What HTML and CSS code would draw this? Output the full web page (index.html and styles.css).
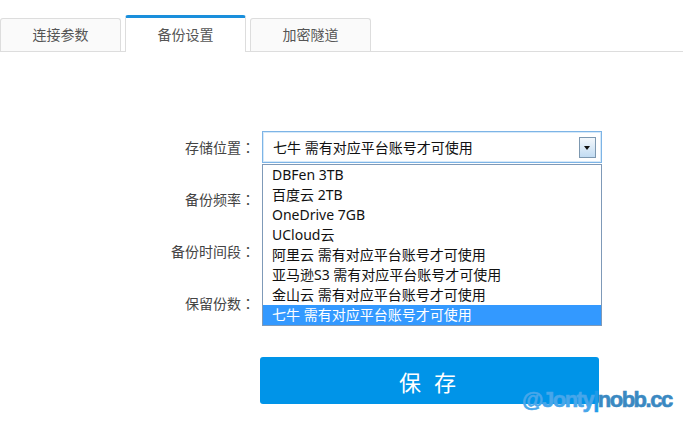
FILE: index.html
```html
<!DOCTYPE html>
<html lang="zh-CN">
<head>
    <meta charset="UTF-8">
    <title>备份设置</title>
    <link rel="stylesheet" href="styles.css">
</head>
<body>
    <!-- Tabs -->
    <div class="tabs">
        <div class="tab">连接参数</div>
        <div class="tab active">备份设置</div>
        <div class="tab">加密隧道</div>
    </div>

    <!-- Backup form -->
    <div class="form">
        <label class="label">存储位置<span class="colon">：</span></label>
        <div class="field select-wrap">
            <div class="select">
                <span>七牛 需有对应平台账号才可使用</span>
                <span class="arrow"></span>
            </div>
            <ul class="dropdown">
                <li>DBFen 3TB</li>
                <li>百度云 2TB</li>
                <li>OneDrive 7GB</li>
                <li>UCloud云</li>
                <li>阿里云 需有对应平台账号才可使用</li>
                <li>亚马逊S3 需有对应平台账号才可使用</li>
                <li>金山云 需有对应平台账号才可使用</li>
                <li class="selected">七牛 需有对应平台账号才可使用</li>
            </ul>
        </div>

        <label class="label">备份频率<span class="colon">：</span></label>
        <div class="field input"></div>

        <label class="label">备份时间段<span class="colon">：</span></label>
        <div class="field input"></div>

        <label class="label">保留份数<span class="colon">：</span></label>
        <div class="field input"></div>

        <div></div>
        <button class="save">保 存</button>
    </div>

    <div class="watermark"><span class="at">@Jonty</span><span class="bar">|</span><span class="site">nobb.cc</span></div>
</body>
</html>
```

FILE: styles.css
```css
body {
    margin: 0;
    background-color: #ffffff;
    font-family: "Noto Sans", "Noto Sans CJK SC", sans-serif;
    color: #333333;
}

/* Tabs */
.tabs {
    display: flex;
    align-items: flex-end;
    gap: 4px;
    padding-top: 15px;
    border-bottom: 1px solid #dddddd;
    height: 36px;
}

.tab {
    box-sizing: border-box;
    width: 121px;
    height: 33px;
    border: 1px solid #dddddd;
    border-bottom: none;
    border-radius: 3px 3px 0 0;
    background-color: #fafafa;
    color: #555555;
    font-size: 14px;
    line-height: 32px;
    text-align: center;
}

.tab.active {
    height: 37px;
    margin-bottom: -1px;
    border-top: 3px solid #1a8fdc;
    background-color: #ffffff;
    line-height: 34px;
}

/* Form */
.form {
    display: grid;
    grid-template-columns: 255px 340px;
    column-gap: 7px;
    row-gap: 20px;
    margin-top: 79px;
}

.label {
    font-family: "Noto Sans CJK SC", sans-serif;
    font-size: 14px;
    color: #444444;
    line-height: 32px;
    text-align: right;
}

/* colon sits in the middle of a full-width box */
.label .colon {
    display: inline-block;
    width: 14px;
    text-align: center;
    font-family: "Noto Sans CJK TC", sans-serif;
}

.field {
    box-sizing: border-box;
    height: 32px;
}

.input {
    border: 1px solid #dddddd;
}

.select-wrap {
    position: relative;
}

.select {
    box-sizing: border-box;
    height: 32px;
    display: flex;
    align-items: center;
    justify-content: space-between;
    padding: 0 5px 0 10px;
    border: 1px solid #7db4e6;
    box-shadow: inset 0 0 0 1px #d6e9f9;
    font-size: 14px;
    color: #111111;
}

.arrow {
    position: relative;
    box-sizing: border-box;
    width: 17px;
    height: 21px;
    border: 1px solid #7d98b0;
    background: linear-gradient(#f4f8fc, #c2dcf2);
}

.arrow::after {
    content: '';
    position: absolute;
    left: 4px;
    top: 8px;
    border-left: 3.5px solid transparent;
    border-right: 3.5px solid transparent;
    border-top: 4px solid #111111;
}

/* open option list, drawn over the other fields */
.dropdown {
    position: absolute;
    top: 33px;
    left: 0;
    box-sizing: border-box;
    width: 340px;
    margin: 0;
    padding: 0;
    list-style: none;
    background-color: #ffffff;
    border: 1px solid #7f9ab8;
    z-index: 2;
}

.dropdown li {
    height: 20px;
    padding-left: 9px;
    font-size: 14px;
    line-height: 20px;
    color: #111111;
}

.dropdown li.selected {
    background-color: #3399ff;
    color: #ffffff;
}

.save {
    width: 339px;
    height: 47px;
    margin-top: 18px;
    margin-left: -2px;
    border: none;
    border-radius: 3px;
    background-color: #0094e8;
    color: #ffffff;
    font-family: "Noto Sans CJK SC", sans-serif;
    font-size: 22px;
    letter-spacing: 4px;
}

/* Watermark */
.watermark {
    position: absolute;
    left: 522px;
    top: 387px;
    font-family: "Liberation Sans", Arial, sans-serif;
    font-weight: bold;
    font-size: 22px;
    letter-spacing: -1.5px;
    -webkit-text-stroke: 0.6px currentColor;
}

.watermark .at {
    color: #47a6ea;
}

.watermark .bar {
    color: #1e9ae8;
}

.watermark .site {
    color: #3a89c2;
}
```
